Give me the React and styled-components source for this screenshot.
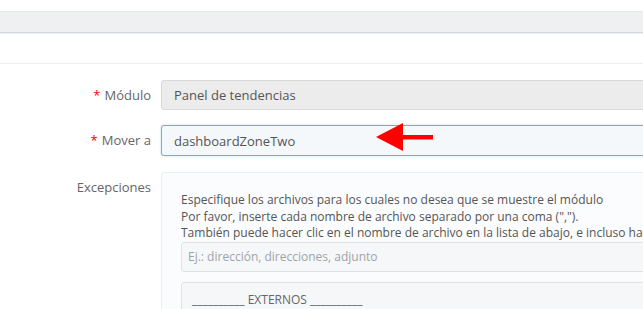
import React from "react";
import styled, { createGlobalStyle } from "styled-components";

const Global = createGlobalStyle`
  html, body { margin: 0; padding: 0; background: #fff; }
  body { font-family: "Open Sans", "Noto Sans", sans-serif; overflow: hidden; }
  * { box-sizing: border-box; }
`;

const Page = styled.div`
  position: relative;
  width: 643px;
  height: 309px;
  overflow: hidden;
  background: #fff;
`;

const TopGap = styled.div`
  height: 11px;
`;

const Toolbar = styled.div`
  height: 22px;
  background: #eff0f2;
  border-top: 1px solid #e6e8eb;
  border-bottom: 1px solid #d3d9df;
  box-shadow: 0 1px 0 #eceff2;
`;

const Header = styled.div`
  height: 31px;
  border-bottom: 1px solid #eceef0;
`;

const Form = styled.div`
  padding-top: 16px;
`;

const Row = styled.div`
  display: grid;
  grid-template-columns: 151px 1fr;
  column-gap: 10px;
  margin-bottom: ${(p) => p.$gap || 15}px;
`;

const Label = styled.div`
  text-align: right;
  font-size: 13px;
  color: #666;
  line-height: ${(p) => (p.$top ? "18px" : "30px")};
  padding-top: ${(p) => (p.$top ? "6px" : "0")};
  white-space: nowrap;
`;

const Req = styled.span`
  color: #e00;
  margin-right: 4px;
`;

const Field = styled.div`
  width: calc(100% + 40px);
`;

const Input = styled.div`
  height: ${(p) => (p.$tall ? 31 : 30)}px;
  border: 1px solid ${(p) => (p.$focus ? "#66afe9" : "#d6d9dc")};
  background: ${(p) => (p.$focus ? "#f4f8fb" : "#ececec")};
  border-radius: 3px;
  padding: 0 12px;
  font-size: 13px;
  color: #555;
  line-height: ${(p) => (p.$tall ? 30 : 29)}px;
  box-shadow: ${(p) => (p.$focus ? "0 0 2px rgba(102,175,233,0.5)" : "none")};
`;

const Well = styled.div`
  border: 1px solid #eceef0;
  background: #fbfcfd;
  border-radius: 3px;
  padding: 19px 19px 20px;
  height: 200px;
`;

const HelpText = styled.div`
  font-size: 12px;
  line-height: 16.5px;
  color: #555;
  white-space: nowrap;
`;

const TextInput = styled.div`
  height: 30px;
  border: 1px solid #e0e3e6;
  background: #f5f7f8;
  border-radius: 3px;
  padding: 0 6px;
  font-size: 12px;
  line-height: 28px;
  color: #a0a4a8;
`;

const SelectBox = styled.div`
  margin-top: 10px;
  height: 120px;
  border: 1px solid #e0e3e6;
  background: #f5f7f8;
  border-radius: 3px;
  padding: 8px 10px;
  font-size: 12px;
  line-height: 17px;
  color: #666;
`;

const Option = styled.div`
  white-space: nowrap;
`;

const Arrow = styled.svg`
  position: absolute;
  left: 376px;
  top: 123px;
`;

export default function App() {
  return (
    <Page>
      <Global />
      <TopGap />
      <Toolbar />
      <Header />
      <Form>
        <Row>
          <Label>
            <Req>*</Req>Módulo
          </Label>
          <Field>
            <Input>Panel de tendencias</Input>
          </Field>
        </Row>
        <Row $gap={16}>
          <Label>
            <Req>*</Req>Mover a
          </Label>
          <Field>
            <Input $focus $tall>dashboardZoneTwo</Input>
          </Field>
        </Row>
        <Row>
          <Label $top>Excepciones</Label>
          <Field>
            <Well>
              <HelpText>Especifique los archivos para los cuales no desea que se muestre el módulo</HelpText>
              <HelpText>Por favor, inserte cada nombre de archivo separado por una coma (",").</HelpText>
              <HelpText>También puede hacer clic en el nombre de archivo en la lista de abajo, e incluso hacer una selección múltiple manteniendo pulsada la tecla Ctrl.</HelpText>
              <TextInput>Ej.: dirección, direcciones, adjunto</TextInput>
              <SelectBox>
                <Option>__________ EXTERNOS __________</Option>
                <Option>__________ ESTÁNDAR __________</Option>
              </SelectBox>
            </Well>
          </Field>
        </Row>
      </Form>
      <Arrow width="60" height="30" viewBox="0 0 60 30">
        <polygon points="0,14 27,0 27,28" fill="#ff0000" />
        <rect x="26" y="12" width="31" height="4.5" fill="#ff0000" />
      </Arrow>
    </Page>
  );
}
